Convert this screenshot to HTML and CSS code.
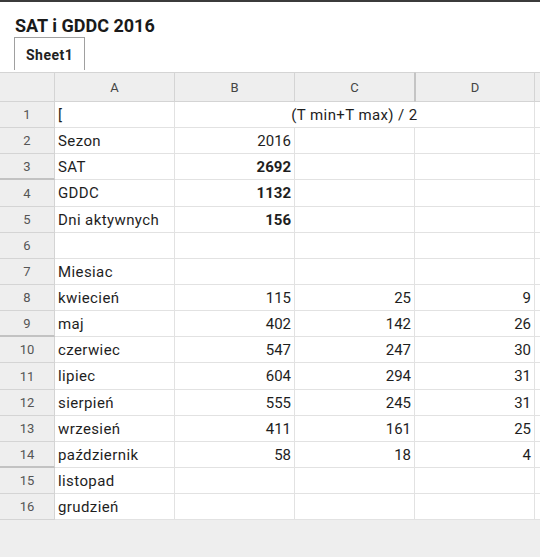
FILE: index.html
```html
<!DOCTYPE html>
<html lang="pl">
<head>
<meta charset="utf-8">
<title>SAT i GDDC 2016</title>
<link rel="stylesheet" href="styles.css">
</head>
<body>
<div class="topbar"></div>
<h1 class="title">SAT i GDDC 2016</h1>
<div class="tabs"><div class="tab">Sheet1</div></div>
<div class="sheet">
  <div class="grid">
    <div class="hd corner"></div>
    <div class="hd col">A</div>
    <div class="hd col">B</div>
    <div class="hd col mark-r">C</div>
    <div class="hd col mark-l">D</div>
    <div class="hd col"></div>

    <div class="rh">1</div><div class="c">[</div><div class="c span3 center">(T min+T max) / 2</div><div class="c"></div>
    <div class="rh">2</div><div class="c">Sezon</div><div class="c num">2016</div><div class="c"></div><div class="c"></div><div class="c"></div>
    <div class="rh thick">3</div><div class="c">SAT</div><div class="c num b">2692</div><div class="c"></div><div class="c"></div><div class="c"></div>
    <div class="rh">4</div><div class="c">GDDC</div><div class="c num b">1132</div><div class="c"></div><div class="c"></div><div class="c"></div>
    <div class="rh">5</div><div class="c">Dni aktywnych</div><div class="c num b">156</div><div class="c"></div><div class="c"></div><div class="c"></div>
    <div class="rh">6</div><div class="c"></div><div class="c"></div><div class="c"></div><div class="c"></div><div class="c"></div>
    <div class="rh">7</div><div class="c">Miesiac</div><div class="c"></div><div class="c"></div><div class="c"></div><div class="c"></div>
    <div class="rh">8</div><div class="c">kwiecień</div><div class="c num">115</div><div class="c num">25</div><div class="c num">9</div><div class="c"></div>
    <div class="rh thick">9</div><div class="c">maj</div><div class="c num">402</div><div class="c num">142</div><div class="c num">26</div><div class="c"></div>
    <div class="rh">10</div><div class="c">czerwiec</div><div class="c num">547</div><div class="c num">247</div><div class="c num">30</div><div class="c"></div>
    <div class="rh">11</div><div class="c">lipiec</div><div class="c num">604</div><div class="c num">294</div><div class="c num">31</div><div class="c"></div>
    <div class="rh">12</div><div class="c">sierpień</div><div class="c num">555</div><div class="c num">245</div><div class="c num">31</div><div class="c"></div>
    <div class="rh">13</div><div class="c">wrzesień</div><div class="c num">411</div><div class="c num">161</div><div class="c num">25</div><div class="c"></div>
    <div class="rh thick">14</div><div class="c">październik</div><div class="c num">58</div><div class="c num">18</div><div class="c num">4</div><div class="c"></div>
    <div class="rh">15</div><div class="c">listopad</div><div class="c"></div><div class="c"></div><div class="c"></div><div class="c"></div>
    <div class="rh">16</div><div class="c">grudzień</div><div class="c"></div><div class="c"></div><div class="c"></div><div class="c"></div>
  </div>
</div>
</body>
</html>
```
FILE: styles.css
```css
html, body {
  margin: 0;
  padding: 0;
  height: 100%;
}
body {
  display: flex;
  flex-direction: column;
  font-family: Roboto, "Liberation Sans", Arial, sans-serif;
  background: #ffffff;
  color: #222222;
  overflow: hidden;
}
.topbar {
  height: 2px;
  background: #3b3b3b;
  flex: none;
}
.title {
  margin: 13px 0 1px 15px;
  font-size: 18px;
  line-height: 21px;
  font-weight: 700;
  color: #1a1a1a;
  flex: none;
}
.tabs {
  display: flex;
  padding: 0 0 2px 14px;
  flex: none;
}
.tab {
  border: 1px solid #a0a0a0;
  border-bottom: none;
  padding: 9px 11px 7px 11px;
  font-size: 14px;
  line-height: 16px;
  font-weight: 700;
  letter-spacing: 0.5px;
  color: #222222;
}
.sheet {
  flex: 1;
  background: #eeeeee;
  overflow: hidden;
}
.grid {
  display: grid;
  grid-template-columns: 55px repeat(5, 120px);
  grid-template-rows: 30px 26px 26px 26px 27px 26px 26px 26px 26px 26px 26px 27px 26px 26px 26px 26px 26px;
  width: max-content;
}
.hd {
  background: #eeeeee;
  border-top: 1px solid #d4d4d4;
  border-bottom: 1px solid #d4d4d4;
  border-right: 1px solid #d4d4d4;
  display: flex;
  align-items: center;
  justify-content: center;
  font-size: 13px;
  color: #444444;
}
.hd.mark-r {
  border-right-color: #c4c4c4;
}
.hd.mark-l {
  border-left: 1px solid #c4c4c4;
}
.rh {
  background: #eeeeee;
  border-right: 1px solid #d4d4d4;
  border-bottom: 1px solid #d4d4d4;
  display: flex;
  align-items: center;
  justify-content: center;
  font-size: 13px;
  color: #555555;
}
.rh.thick {
  border-bottom: 2px solid #c2c2c2;
}
.c {
  background: #ffffff;
  border-right: 1px solid #e2e2e2;
  border-bottom: 1px solid #e2e2e2;
  padding: 0 3px;
  display: flex;
  align-items: center;
  font-size: 15px;
  letter-spacing: 0.4px;
  color: #1e1e1e;
  white-space: nowrap;
  overflow: hidden;
}
.c.num {
  justify-content: flex-end;
  letter-spacing: 0;
}
.c.b {
  font-weight: 700;
}
.c.center {
  justify-content: center;
}
.span3 {
  grid-column: span 3;
}
```
